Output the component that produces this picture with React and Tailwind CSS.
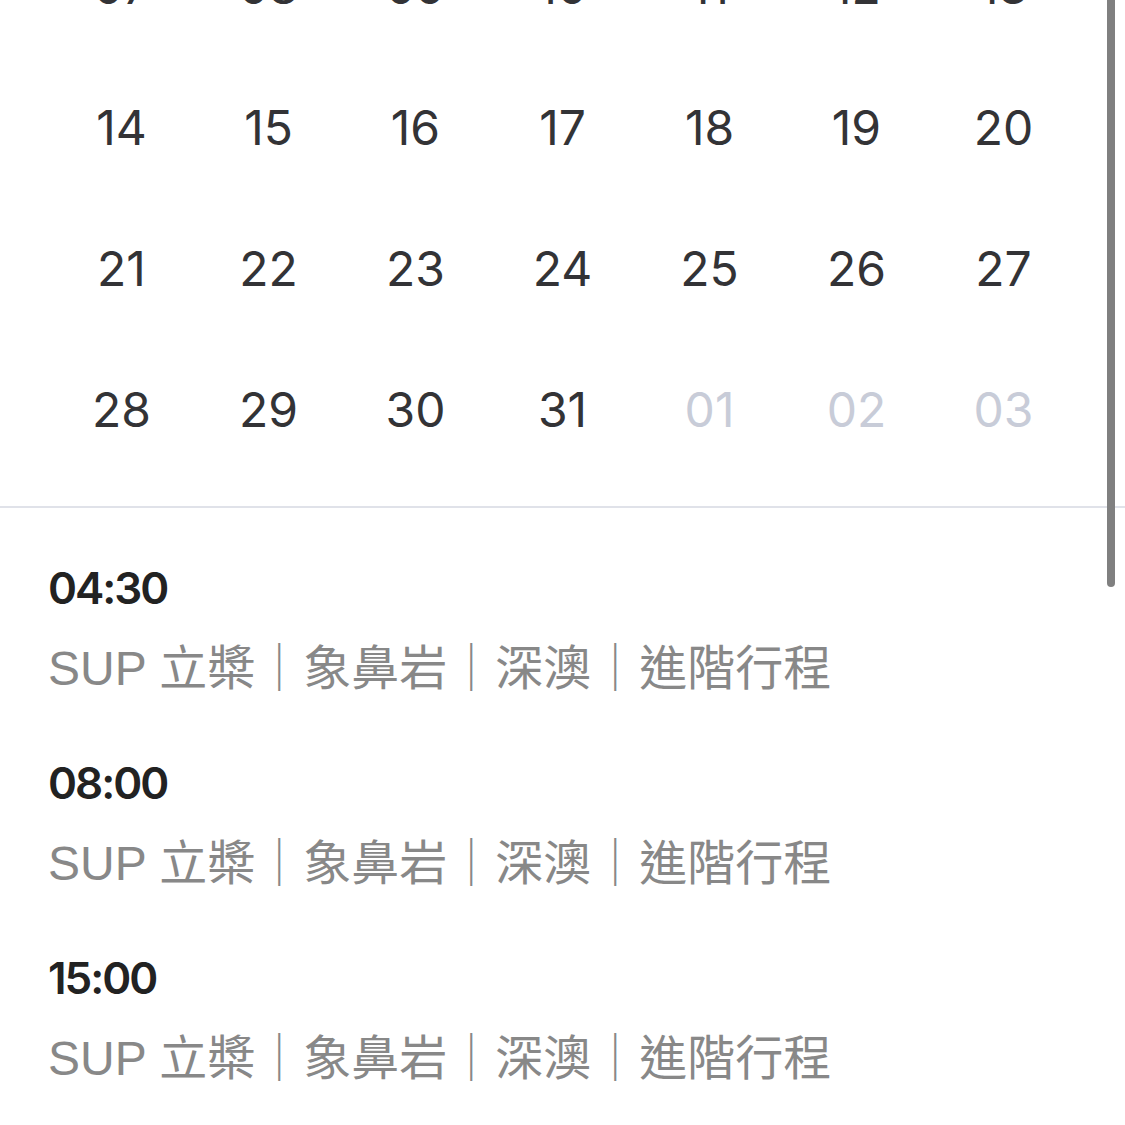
import React from "react";

const rows = [
  ["07", "08", "09", "10", "11", "12", "13"],
  ["14", "15", "16", "17", "18", "19", "20"],
  ["21", "22", "23", "24", "25", "26", "27"],
  ["28", "29", "30", "31", "01", "02", "03"],
];

const items = ["04:30", "08:00", "15:00"];

export default function App() {
  return (
    <div className="relative h-[1125px] w-[1125px] overflow-hidden bg-white">
      <div className="-mt-[84px]">
        <div className="px-12 pb-[26px]">
          {rows.map((r, ri) => (
            <div key={ri} className="grid grid-cols-7">
              {r.map((d, di) => {
                const muted = ri === 3 && di >= 4;
                return (
                  <div
                    key={di}
                    className={`flex h-[141px] items-center justify-center text-[48px] font-[Inter,sans-serif] ${
                      muted ? "text-[#c8ccd8]" : "text-[#333336]"
                    }`}
                  >
                    {d}
                  </div>
                );
              })}
            </div>
          ))}
        </div>
        <div className="h-[2px] w-full bg-[#e0e2e9]" />
        <div className="flex flex-col gap-[50px] px-12 pt-[50px]">
          {items.map((t) => (
            <div key={t} className="flex flex-col">
              <div className="h-[60px] text-[44px] leading-[60px] font-semibold tracking-[-2px] text-[#222222] font-[Inter,sans-serif]">
                {t}
              </div>
              <div className="mt-[17px] h-[68px] text-[48px] leading-[68px] text-[#888888] font-['Liberation_Sans','Noto_Sans_CJK_TC',sans-serif]">
                SUP 立槳｜象鼻岩｜深澳｜進階行程
              </div>
            </div>
          ))}
        </div>
      </div>
      <div className="absolute left-[1107px] top-0 h-[587px] w-[8px] rounded-b-full bg-[#808080]" />
    </div>
  );
}
